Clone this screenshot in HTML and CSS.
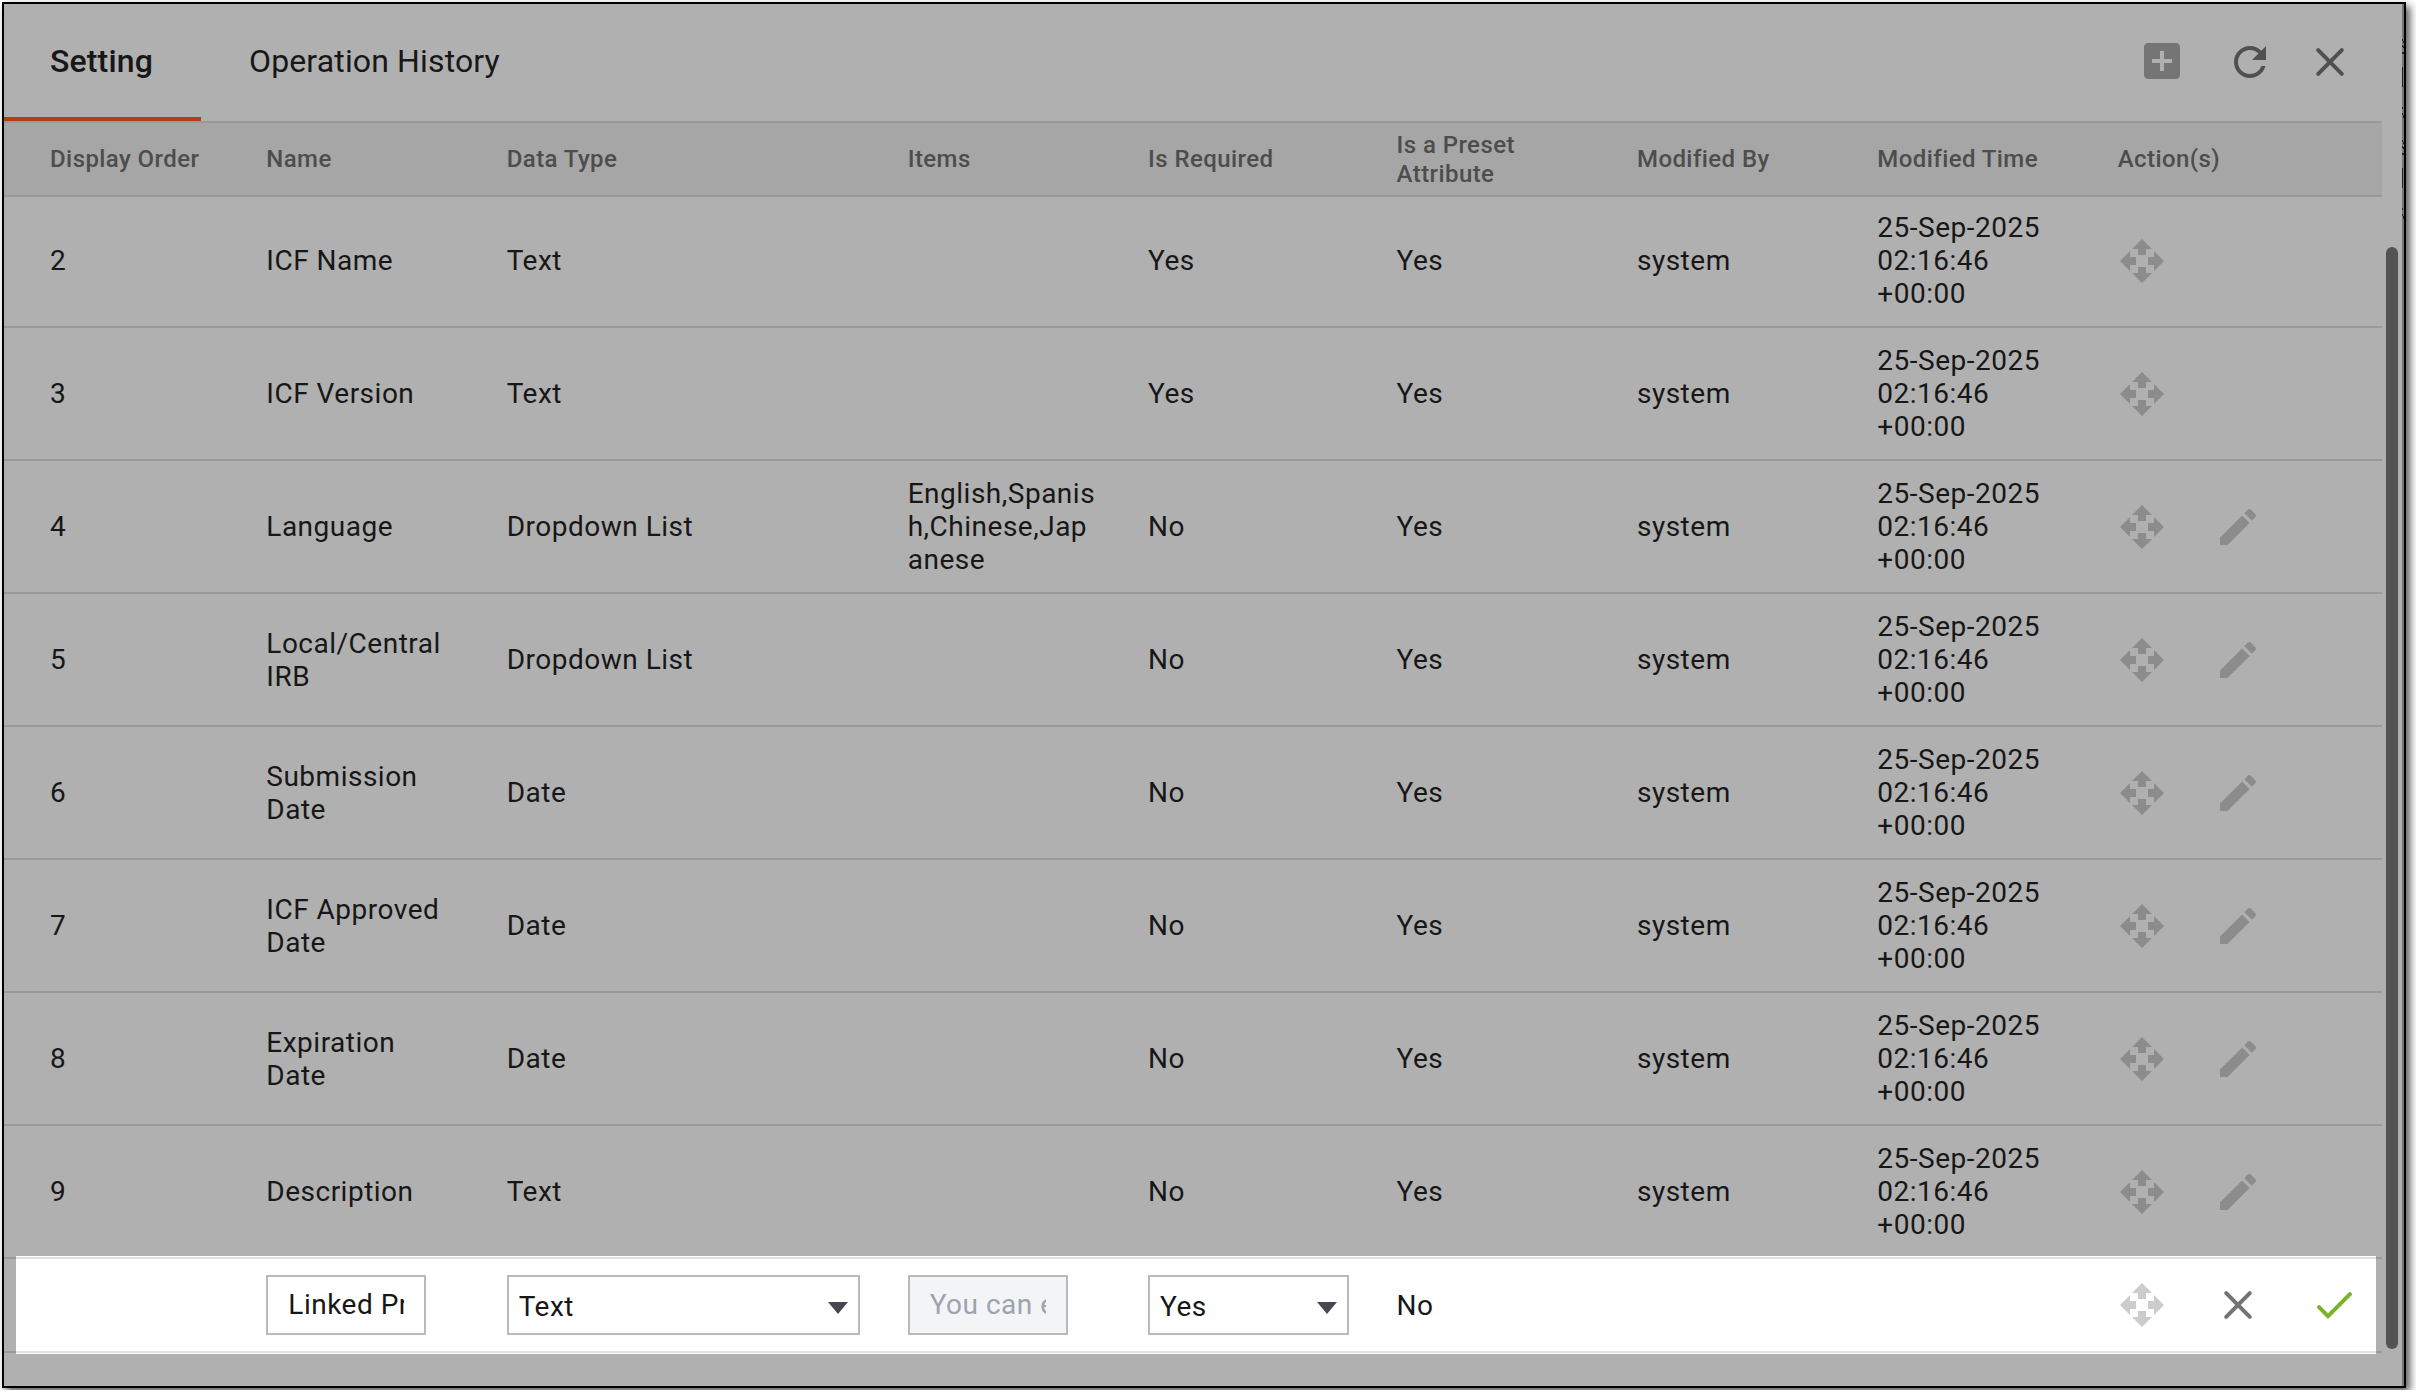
FILE: index.html
```html
<!DOCTYPE html>
<html lang="en">
<head>
<meta charset="utf-8">
<title>Setting</title>
<link rel="stylesheet" href="styles.css">
</head>
<body>
<svg class="sprite" aria-hidden="true">
  <symbol id="move" viewBox="0 0 24 24"><path d="M12 1l5 5h-3v3h-4V6H7zM12 23l-5-5h3v-3h4v3h3zM1 12l5-5v3h3v4H6v3zM23 12l-5 5v-3h-3v-4h3V7z"/></symbol>
  <symbol id="edit" viewBox="0 0 24 24"><path d="M3 17.25V21h3.75L17.81 9.94l-3.75-3.75L3 17.25zM20.71 7.04c.39-.39.39-1.02 0-1.41l-2.34-2.34c-.39-.39-1.02-.39-1.41 0l-1.83 1.83 3.75 3.75 1.83-1.83z"/></symbol>
  <symbol id="close" viewBox="0 0 24 24"><path d="M6.1 6.1L17.9 17.9M17.9 6.1L6.1 17.9"/></symbol>
  <symbol id="check" viewBox="0 0 24 24"><path d="M4.5 13.1L9 17.6 20 6.6"/></symbol>
  <symbol id="refresh" viewBox="0 0 24 24"><path d="M17.65 6.35C16.2 4.9 14.21 4 12 4c-4.42 0-7.99 3.58-7.99 8s3.57 8 7.99 8c3.73 0 6.84-2.55 7.73-6h-2.08c-.82 2.33-3.04 4-5.65 4-3.31 0-6-2.69-6-6s2.69-6 6-6c1.66 0 3.14.69 4.22 1.78L13 11h7V4l-2.35 2.35z"/></symbol>
  <symbol id="add" viewBox="0 0 24 24"><path d="M19 3H5c-1.11 0-2 .9-2 2v14c0 1.1.89 2 2 2h14c1.1 0 2-.9 2-2V5c0-1.1-.9-2-2-2zm-2 10h-4v4h-2v-4H7v-2h4V7h2v4h4v2z"/></symbol>
</svg>
<main class="panel">
  <header class="topbar">
    <nav class="tabs">
      <a class="tab active">Setting</a>
      <a class="tab">Operation History</a>
    </nav>
    <div class="tools">
      <svg class="icon add"><use href="#add"/></svg>
      <svg class="icon refresh"><use href="#refresh"/></svg>
      <svg class="icon line dismiss"><use href="#close"/></svg>
    </div>
  </header>
  <section class="table">
    <div class="row head">
      <div>Display Order</div><div>Name</div><div>Data Type</div><div>Items</div><div>Is Required</div><div>Is a Preset<br>Attribute</div><div>Modified By</div><div>Modified Time</div><div>Action(s)</div>
    </div>
    <div class="row">
      <div>2</div><div>ICF Name</div><div>Text</div><div></div><div>Yes</div><div>Yes</div><div>system</div><div>25-Sep-2025<br>02:16:46<br>+00:00</div>
      <div class="actions"><svg class="icon"><use href="#move"/></svg></div>
    </div>
    <div class="row">
      <div>3</div><div>ICF Version</div><div>Text</div><div></div><div>Yes</div><div>Yes</div><div>system</div><div>25-Sep-2025<br>02:16:46<br>+00:00</div>
      <div class="actions"><svg class="icon"><use href="#move"/></svg></div>
    </div>
    <div class="row">
      <div>4</div><div>Language</div><div>Dropdown List</div><div>English,Spanis<br>h,Chinese,Jap<br>anese</div><div>No</div><div>Yes</div><div>system</div><div>25-Sep-2025<br>02:16:46<br>+00:00</div>
      <div class="actions"><svg class="icon"><use href="#move"/></svg><svg class="icon"><use href="#edit"/></svg></div>
    </div>
    <div class="row">
      <div>5</div><div>Local/Central<br>IRB</div><div>Dropdown List</div><div></div><div>No</div><div>Yes</div><div>system</div><div>25-Sep-2025<br>02:16:46<br>+00:00</div>
      <div class="actions"><svg class="icon"><use href="#move"/></svg><svg class="icon"><use href="#edit"/></svg></div>
    </div>
    <div class="row">
      <div>6</div><div>Submission<br>Date</div><div>Date</div><div></div><div>No</div><div>Yes</div><div>system</div><div>25-Sep-2025<br>02:16:46<br>+00:00</div>
      <div class="actions"><svg class="icon"><use href="#move"/></svg><svg class="icon"><use href="#edit"/></svg></div>
    </div>
    <div class="row">
      <div>7</div><div>ICF Approved<br>Date</div><div>Date</div><div></div><div>No</div><div>Yes</div><div>system</div><div>25-Sep-2025<br>02:16:46<br>+00:00</div>
      <div class="actions"><svg class="icon"><use href="#move"/></svg><svg class="icon"><use href="#edit"/></svg></div>
    </div>
    <div class="row">
      <div>8</div><div>Expiration<br>Date</div><div>Date</div><div></div><div>No</div><div>Yes</div><div>system</div><div>25-Sep-2025<br>02:16:46<br>+00:00</div>
      <div class="actions"><svg class="icon"><use href="#move"/></svg><svg class="icon"><use href="#edit"/></svg></div>
    </div>
    <div class="row">
      <div>9</div><div>Description</div><div>Text</div><div></div><div>No</div><div>Yes</div><div>system</div><div>25-Sep-2025<br>02:16:46<br>+00:00</div>
      <div class="actions"><svg class="icon"><use href="#move"/></svg><svg class="icon"><use href="#edit"/></svg></div>
    </div>
    <div class="row editing">
      <div></div>
      <div><div class="field input"><span>Linked Pr</span></div></div>
      <div><div class="field select wide"><span>Text</span><i class="caret"></i></div></div>
      <div><div class="field input disabled"><span>You can e</span></div></div>
      <div><div class="field select"><span>Yes</span><i class="caret"></i></div></div>
      <div>No</div><div></div><div></div>
      <div class="actions"><svg class="icon pale"><use href="#move"/></svg><svg class="icon line cancel"><use href="#close"/></svg><svg class="icon line confirm"><use href="#check"/></svg></div>
    </div>
  </section>
  <div class="scrollbar"></div>
  <!-- sliver of the page behind the drawer -->
  <svg class="behind" viewBox="0 0 2 240"><path fill="#222" d="M0 35h1v2H0zM1 37h1v2H1zM0 41h1v2H0zM1 42h1v2H1zM0 48h2v2H0zM0 63h1v20H0zM0 103h1v2H0zM0 109h1v2H0zM1 111h1v3H1zM0 136h1v2H0zM1 138h1v2H1zM0 142h1v2H0zM1 143h1v2H1zM0 149h2v2H0zM0 164h1v20H0zM0 204h1v2H0zM0 210h1v2H0zM1 212h1v3H1z"/></svg>
</main>
</body>
</html>
```
FILE: styles.css
```css
* { box-sizing: border-box; }
body {
  margin: 0;
  padding: 2px;
  background: #fff;
  font-family: Roboto, sans-serif;
  font-size: 28px;
  line-height: 33px;
  letter-spacing: 0.5px;
  color: #171717;
}
.sprite { display: none; }
.panel {
  position: relative;
  width: 2404px;
  height: 1386px;
  border: 2px solid #000;
  background: linear-gradient(to left, #777 2px, #b0b0b0 2px);
  box-shadow: 4px 4px 8px rgba(0, 0, 0, .65);
}
.topbar {
  display: flex;
  justify-content: space-between;
  height: 117px;
}
.tabs { display: flex; height: 117px; }
.tab {
  height: 117px;
  padding: 0 48px;
  font-size: 32px;
  line-height: 114px;
  letter-spacing: 0.14px;
}
.tab.active {
  width: 197px;
  height: 117px;
  font-weight: 500;
  border-bottom: 4px solid #b43c17;
  padding: 0 0 0 46px;
}
.icon { width: 48px; height: 48px; fill: #8c8c8c; flex: none; display: block; }
.tools { display: flex; padding: 34px 50px 0 0; }
.tools .icon { fill: #505050; }
.tools .add { fill: #757575; margin: -1px 40px 0 0; }
.tools .refresh { margin-right: 32px; }
.line { fill: none; stroke-width: 2; stroke-linecap: round; }
.tools .line { fill: none; stroke: #505050; }
.table { width: 2378px; }
.row {
  display: grid;
  grid-template-columns: 216.3px 240.4px 401px 240.4px 248.5px 240.4px 240.4px 240.4px 1fr;
  align-items: center;
  height: 133px;
  padding-left: 46px;
  border-bottom: 2px solid #999;
}
.head {
  position: relative;
  height: 76px;
  margin-bottom: -2px;
  padding-top: 1px;
  background: #a6a6a6;
  border-top: 2px solid #999;
  font-size: 24px;
  line-height: 29px;
  font-weight: 500;
  letter-spacing: 0.42px;
  color: #4d4d4d;
}
.actions { display: flex; gap: 48px; }
.editing {
  position: relative;
  z-index: 0;
  height: 94px;
}
.editing::before {
  content: "";
  position: absolute;
  z-index: -1;
  inset: -3px 6px -3px 12px;
  border: solid #fff;
  border-width: 1px 0;
  background: linear-gradient(#dfdfdf 2px, #fff 2px, #fff calc(100% - 2px), #dfdfdf calc(100% - 2px));
}
.field {
  display: flex;
  align-items: center;
  width: 160px;
  height: 60px;
  border: 2px solid #bababa;
  background: #fff;
}
.input { padding: 0 20px 2px; }
.input span { overflow: hidden; white-space: nowrap; }
.disabled { background: #f2f4f6; color: #9ca3af; }
.select { width: 201px; justify-content: space-between; padding: 2px 10px 0 10px; }
.wide { width: 353px; }
.caret {
  border: 10px solid transparent;
  border-top: 12px solid #454850;
  border-bottom: 0;
  margin-top: 3px;
}
.pale { fill: #ccc; }
.cancel { stroke: #737373; }
.confirm { stroke: #7ab32a; }
.scrollbar {
  position: absolute;
  left: 2382px;
  top: 243px;
  width: 12px;
  height: 1102px;
  border-radius: 6px;
  background: #535353;
}
.behind {
  position: absolute;
  top: 0;
  right: 0;
  width: 2px;
  height: 240px;
}
```
